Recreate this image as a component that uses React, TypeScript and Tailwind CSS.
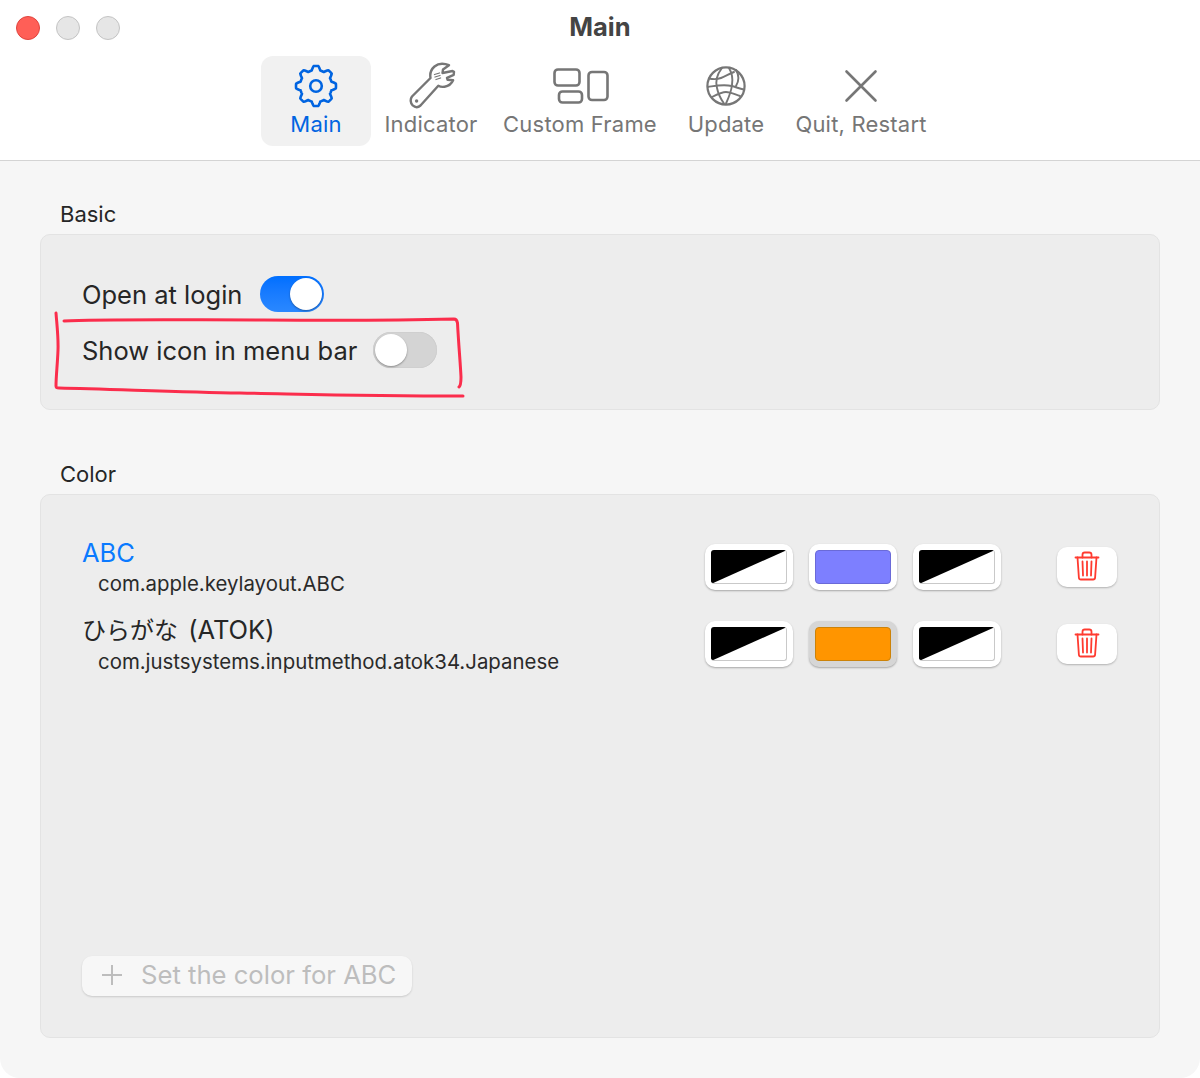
import { type ReactNode } from 'react'

const font = { fontFamily: 'Inter, "Noto Sans CJK JP", sans-serif' }

// rounded 8 tooth outline, sampled around the centre
const gearPath = Array.from({ length: 160 }, (_, i) => {
  const a = (i / 160) * Math.PI * 2
  const wave = Math.max(-1, Math.min(1, 1.7 * Math.cos(8 * a)))
  const r = 18 + 2 * wave
  return `${i === 0 ? 'M' : 'L'}${(22 + r * Math.sin(a)).toFixed(2)} ${(22 - r * Math.cos(a)).toFixed(2)}`
}).join('') + 'z'

function GearIcon() {
  return (
    <svg width="44" height="44" viewBox="0 0 44 44" fill="none" stroke="#0064e1" strokeWidth="2.6" strokeLinejoin="round">
      <path d={gearPath} />
      <circle cx="22" cy="22" r="5.8" />
    </svg>
  )
}

function WrenchIcon() {
  return (
    <svg width="48" height="48" viewBox="0 0 48 48" fill="none" stroke="#767676" strokeWidth="2.4" strokeLinejoin="round" strokeLinecap="round" className="ml-[2px]">
      <path d="M4 34.500 22.500 16c-.8-4.500.5-8.500 4-11.500 3-2.400 7-3.200 11-2.300l3.500 1-6 4.300-.5 3.500 10-2 1.500.8-.3 3-6.700 3 .6 2 5.500.5c-1.500 3.500-4.500 5.800-8.500 6.400-2.500.4-4.600 0-6.300-1L12.500 43.500c-2.500 2.200-5.500 2-7.800-.1-2.300-2.300-2.700-6.200-.7-8.900z" />
      <circle cx="8.600" cy="39" r="1.700" fill="#767676" stroke="none" />
      <path d="M26.500 12.500l5-1.500M27 15l5-1.500M28 17.500l4.600-1.500" strokeWidth="1.300" />
    </svg>
  )
}

function FrameIcon() {
  return (
    <svg width="56" height="36" viewBox="0 0 56 36" fill="none" stroke="#767676" strokeWidth="2.6" className="ml-[2px]">
      <rect x="1.500" y="1.500" width="25" height="16" rx="3.500" />
      <rect x="6" y="23.500" width="23" height="11" rx="3.500" />
      <rect x="35.500" y="4" width="19" height="28" rx="3.500" />
    </svg>
  )
}

function GlobeIcon() {
  return (
    <svg width="40" height="40" viewBox="0 0 40 40" fill="none" stroke="#767676" strokeWidth="2.2" strokeLinecap="round">
      <circle cx="20" cy="20" r="18.600" />
      <path d="M16 2c-4 5-7 12-5 20 1 5 3 10 7 15.500M23 2c3 5 4 11 3 17-.7 6-3 12-6 18.500M30 4c3 5 3 11 0 16" strokeWidth="1.900" />
      <path d="M3 12.500c5 1 8 1 12-.5s8-4 13-6M1.800 21c7-1 15-3 24-1 4 1 8 3 12 3.500M6 31c6-3 10-5 14-5 5 0 10 3 14 4" strokeWidth="1.900" />
    </svg>
  )
}

function CrossIcon() {
  return (
    <svg width="36" height="36" viewBox="0 0 36 36" fill="none" stroke="#767676" strokeWidth="2.6" strokeLinecap="round">
      <path d="M3.500 3.500l29 29M32.500 3.500l-29 29" />
    </svg>
  )
}

function TrashIcon() {
  return (
    <svg width="26" height="30" viewBox="0 0 26 30" fill="none" stroke="#ff3b30" strokeWidth="1.800" strokeLinejoin="round" strokeLinecap="round" className="-mt-[2px]">
      <path d="M1.500 6.500h23" />
      <path d="M8.500 6.500V3.800c0-1.300 1-2.300 2.300-2.300h4.400c1.300 0 2.300 1 2.300 2.300v2.700" />
      <path d="M3.500 6.500l1.400 20.200c.1 1.100 1 1.800 2 1.800h12.200c1 0 1.900-.7 2-1.800l1.400-20.200" />
      <path d="M8.500 10.500l.5 14M13 10.500v14M17.500 10.500l-.5 14" />
    </svg>
  )
}

function Tab({ icon, label, active, className }: { icon: ReactNode; label: string; active?: boolean; className: string }) {
  return (
    <div className={`flex h-[90px] flex-col items-center rounded-xl ${active ? 'bg-[#f1f1f1] text-[#0064e1]' : 'text-[#767676]'} ${className}`}>
      <div className="flex h-[60px] shrink-0 items-center justify-center">{icon}</div>
      <span className="-mt-[5px] text-[22px] leading-[26px] tracking-[0.2px] whitespace-nowrap">{label}</span>
    </div>
  )
}

function Toggle({ on }: { on?: boolean }) {
  return (
    <div className={`flex h-9 w-16 items-center rounded-full p-[2px] ${on ? 'justify-end bg-gradient-to-b from-[#006fff] to-[#2a88ff]' : 'justify-start bg-[#d4d4d4] shadow-[inset_0_0_1px_rgba(0,0,0,0.2)]'}`}>
      <div className="size-8 rounded-full bg-white shadow-[0_1px_2px_rgba(0,0,0,0.35)]" />
    </div>
  )
}

function Swatch({ color, pressed }: { color?: string; pressed?: boolean }) {
  return (
    <div className={`flex h-[46px] w-[88px] items-center justify-center rounded-[10px] shadow-[0_1px_2px_rgba(0,0,0,0.3)] ${pressed ? 'bg-[#d6d6d6]' : 'bg-white'}`}>
      {color === 'indigo' && <div className="h-[34px] w-[76px] rounded-[4px] border border-[#6a6ad8] bg-[#7d7fff]" />}
      {color === 'orange' && <div className="h-[34px] w-[76px] rounded-[4px] border border-[#cc8208] bg-[#ff9500]" />}
      {!color && (
        <div className="h-[34px] w-[76px] overflow-hidden rounded-[3px] border-r border-b border-[#c9c9c9] bg-white">
          <svg width="76" height="34" viewBox="0 0 76 34" className="block">
            <path d="M0 0h76L0 34z" fill="#000" />
          </svg>
        </div>
      )}
    </div>
  )
}

function ColorRow({ title, id, second }: { title: ReactNode; id: string; second: ReactNode }) {
  return (
    <div className="flex h-[77px] items-start">
      <div className="flex-1">
        <div className="text-[25.500px] leading-[30px] text-[#262626]">{title}</div>
        <div className="mt-[3px] pl-4 text-[20.400px] leading-[26px] text-[#2a2a2a]">{id}</div>
      </div>
      <div className="mt-[6px] flex gap-4">
        <Swatch />
        {second}
        <Swatch />
      </div>
      <div className="mt-[9px] ml-14 flex h-10 w-[60px] items-center justify-center rounded-[10px] bg-white shadow-[0_1px_2px_rgba(0,0,0,0.25)]">
        <TrashIcon />
      </div>
    </div>
  )
}

export default function App() {
  return (
    <div className="relative h-[1078px] w-[1200px] overflow-hidden bg-white" style={font}>
      <div className="flex h-full flex-col overflow-hidden rounded-b-[20px] bg-[#f6f6f6]">
        <header className="relative h-[161px] shrink-0 border-b border-[#d4d4d4] bg-white">
          <div className="absolute top-[16px] left-4 flex gap-4">
            <div className="size-6 rounded-full border border-[#e0443e] bg-[#ff5f57]" />
            <div className="size-6 rounded-full border border-[#c4c4c4] bg-[#e6e6e6]" />
            <div className="size-6 rounded-full border border-[#c4c4c4] bg-[#e6e6e6]" />
          </div>
          <div className="pt-[11px] text-center text-[25.500px] leading-[32px] font-bold text-[#444444]">Main</div>
          <nav className="mt-[13px] flex justify-center">
            <Tab active icon={<GearIcon />} label="Main" className="w-[110px]" />
            <Tab icon={<WrenchIcon />} label="Indicator" className="w-[120px]" />
            <Tab icon={<FrameIcon />} label="Custom Frame" className="w-[178px]" />
            <Tab icon={<GlobeIcon />} label="Update" className="w-[114px]" />
            <Tab icon={<CrossIcon />} label="Quit, Restart" className="w-[156px]" />
          </nav>
        </header>

        <main className="flex flex-1 flex-col px-10 pt-[39px] pb-[40px]">
          <div className="pl-5 text-[22px] leading-[28px] text-[#262626]">Basic</div>
          <section className="mt-[6px] flex h-[176px] shrink-0 flex-col rounded-[10px] border border-[#e3e3e3] bg-[#ededed] px-[41px] pt-[41px]">
            <div className="flex h-9 items-center gap-[18px]">
              <span className="pt-[2px] text-[25.500px] leading-9 text-[#262626]">Open at login</span>
              <Toggle on />
            </div>
            <div className="mt-5 flex h-9 items-center gap-4">
              <span className="pt-[2px] text-[25.500px] leading-9 text-[#262626]">Show icon in menu bar</span>
              <Toggle />
            </div>
          </section>

          <div className="mt-[50px] pl-5 text-[22px] leading-[28px] text-[#262626]">Color</div>
          <section className="mt-[6px] flex flex-1 flex-col rounded-[10px] border border-[#e3e3e3] bg-[#ededed] pt-[43px] pr-[42px] pb-[41px] pl-[41px]">
            <ColorRow title={<span className="text-[#0a7aff]">ABC</span>} id="com.apple.keylayout.ABC" second={<Swatch color="indigo" />} />
            <ColorRow title={<><span className="mr-[3px] text-[24px]">ひらがな</span> (ATOK)</>} id="com.justsystems.inputmethod.atok34.Japanese" second={<Swatch color="orange" pressed />} />
            <div className="mt-auto flex h-10 w-[330px] items-center gap-[17px] rounded-[10px] bg-[#f7f7f7] pb-[2px] pl-[18px] text-[25.650px] text-[#bdbdbd] shadow-[0_1px_2px_rgba(0,0,0,0.15)]">
              <svg width="24" height="24" viewBox="0 0 24 24" fill="none" stroke="#bdbdbd" strokeWidth="2"><path d="M12 2v20M2 12h20" /></svg>
              <span className="whitespace-nowrap">Set the color for ABC</span>
            </div>
          </section>
        </main>
      </div>

      {/* hand drawn annotation */}
      <svg className="pointer-events-none absolute top-[310px] left-[50px]" width="420" height="95" viewBox="0 0 420 95" fill="none" stroke="#fb2d4c" strokeWidth="3" strokeLinecap="round" strokeLinejoin="round">
        <path d="M14 11c38-2 120-1 200-1 70 .5 150 0 190-1 2 0 3 1 3.500 4 1 20 3 42 3.500 54 0 6-.5 9-2 10" />
        <path d="M6 3c1 13 2.500 25 2 37-.5 14-2 26-2 36 0 2 1 2 3 2 50 1 120 4 181 5 60 1 120 3 223 3" />
      </svg>
    </div>
  )
}
